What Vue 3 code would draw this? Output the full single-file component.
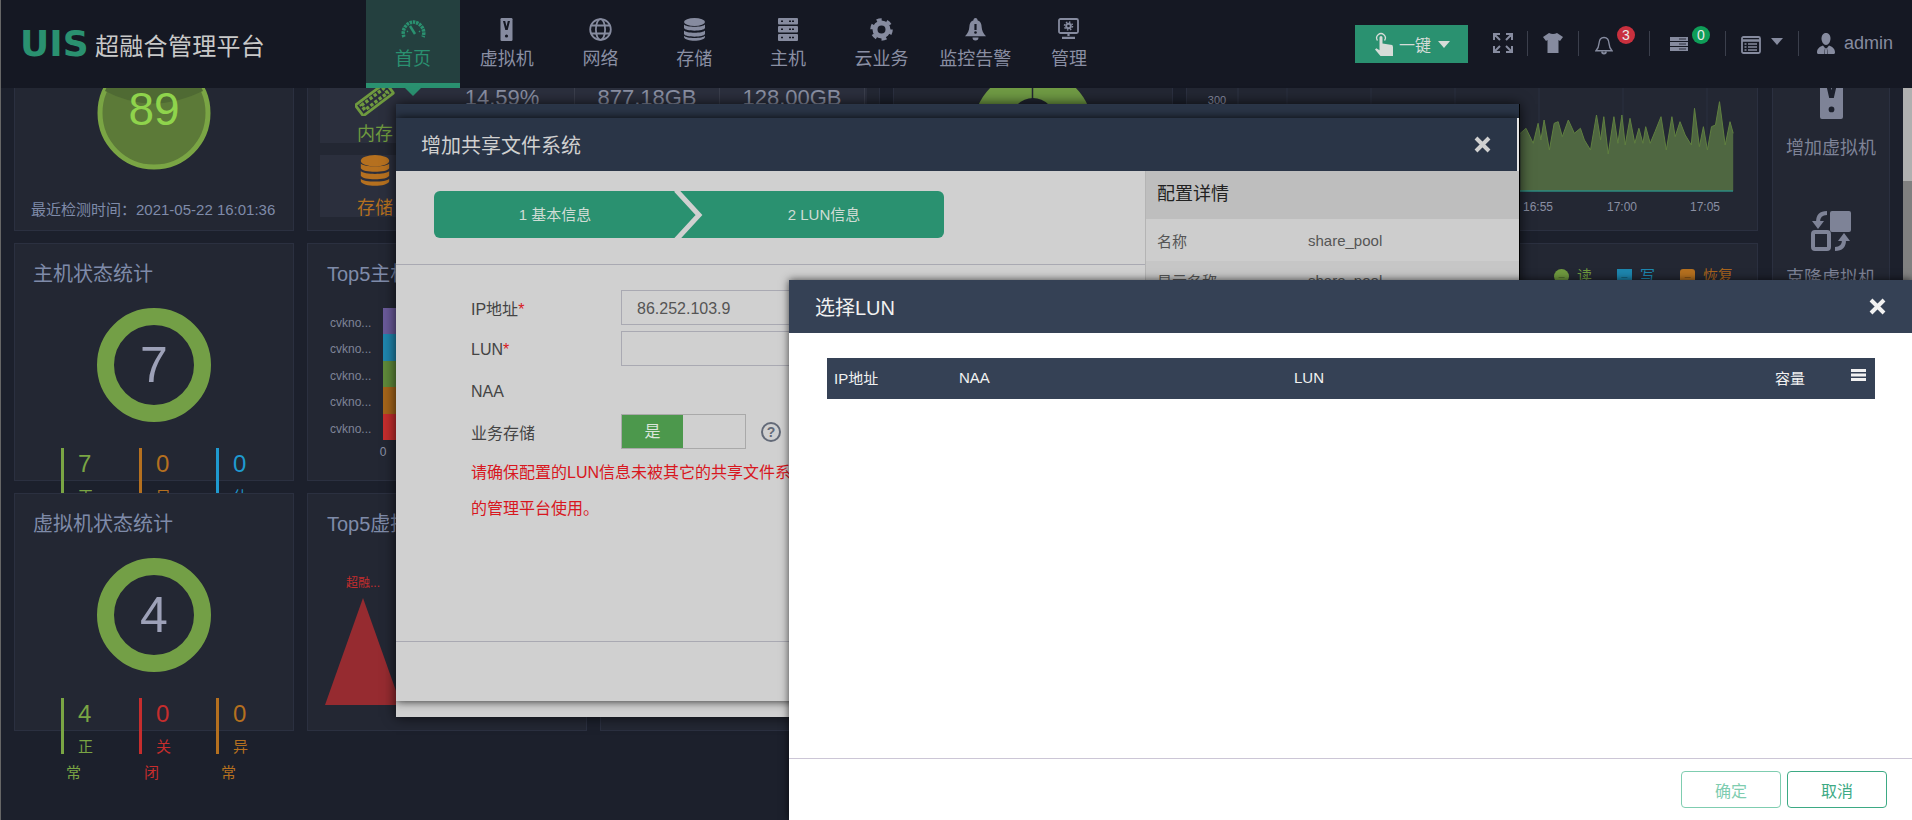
<script setup>
const nav = ['首页', '虚拟机', '网络', '存储', '主机', '云业务', '监控告警', '管理']

const raw = [
  [596,400],[610,385],[628,430],[640,370],[647,420],[655,360],[668,450],[680,370],[690,365],[700,410],[715,360],[730,400],[745,385],[755,420],[770,450],[785,345],[795,420],[803,350],[814,462],[828,350],[838,430],[848,345],[856,435],[868,355],[880,430],[890,385],[900,430],[907,380],[918,430],[930,395],[945,350],[958,450],[972,350],[980,410],[992,365],[1005,405],[1020,435],[1028,325],[1040,440],[1050,380],[1060,450],[1070,380],[1080,375],[1090,305],[1104,435],[1116,365],[1124,400]
]
const pts = raw.map(([x, y]) => [(1280 + x / 2.48).toFixed(1), (y / 3).toFixed(1)])
const line = pts.map(p => p.join(',')).join(' ')
const area = `${pts[0][0]},191 ${line} ${pts[pts.length - 1][0]},191`
const gridX = [1287, 1371, 1455, 1539, 1623, 1707]
const ticks = [['16:55', 1538], ['17:00', 1622], ['17:05', 1705]]

const hostStats = [
  { n: 7, label: '正常', c: 'green' },
  { n: 0, label: '异常', c: 'orange' },
  { n: 0, label: '休眠', c: 'blue' }
]
const vmStats = [
  { n: 4, label: '正常', c: 'green' },
  { n: 0, label: '关闭', c: 'red' },
  { n: 0, label: '异常', c: 'orange' }
]
const hosts = ['purple', 'blue', 'green', 'orange', 'red']
</script>

<template>
  <div class="page">
    <header class="top">
      <div class="logo">
        <span class="logo-mark">UIS</span>
        <span class="logo-name">超融合管理平台</span>
      </div>
      <nav class="nav">
        <div v-for="(item, i) in nav" :key="item" class="nav-item" :class="{ active: i === 0 }">
          <span class="nav-icon">
            <svg v-if="i === 0" width="25" height="18" viewBox="0 0 25 18" fill="none" stroke="#2a9170">
              <path d="M3 17A11 11 0 0 1 12.500 2 11 11 0 0 1 22 17" stroke-width="3.500" stroke-dasharray="2.500 .8" />
              <path d="M9 6l5 8" stroke-width="2.500" />
              <path d="M6 11l1 .8M19 11l-1 .8" stroke-width="1.500" />
            </svg>
            <svg v-else-if="i === 1" width="13" height="23" viewBox="0 0 12 23">
              <rect width="12" height="23" rx="1.200" fill="#868b9f" />
              <path d="M2.500 3h2.200L6 8.500 7.300 3h2.200L7.200 12H4.800z" fill="#151823" />
              <circle cx="6" cy="18" r="1.600" fill="#151823" />
            </svg>
            <svg v-else-if="i === 2" width="23" height="23" viewBox="0 0 23 23" fill="none" stroke="#868b9f" stroke-width="1.800">
              <circle cx="11.500" cy="11.500" r="10.300" />
              <ellipse cx="11.500" cy="11.500" rx="4.600" ry="10.300" />
              <path d="M2 7.500h19M2 15.500h19" />
            </svg>
            <svg v-else-if="i === 3" width="21" height="23" viewBox="0 0 21 23" fill="#868b9f">
              <ellipse cx="10.500" cy="4" rx="10.500" ry="4" />
              <path d="M0 6.500c2 3 19 3 21 0V10c-1 3.500-20 3.500-21 0zM0 12.500c2 3 19 3 21 0V16c-1 3.500-20 3.500-21 0zM0 17.800c2 3 19 3 21 0V19c-1 5-20 5-21 0z" />
            </svg>
            <svg v-else-if="i === 4" width="20" height="23" viewBox="0 0 20 23">
              <g fill="#868b9f">
                <rect width="20" height="6.500" rx="1" />
                <rect y="8" width="20" height="6.500" rx="1" />
                <rect y="16" width="20" height="7" rx="1" />
              </g>
              <path d="M11 3.200h6M11 11.200h6M11 19.500h6M3 3.200h3M3 11.200h3M3 19.500h3" stroke="#151823" stroke-width="1.500" stroke-dasharray="2 1" />
            </svg>
            <svg v-else-if="i === 5" width="23" height="23" viewBox="0 0 23 23" fill="none" stroke="#868b9f">
              <circle cx="11.500" cy="11.500" r="6.500" stroke-width="5" />
              <circle cx="11.500" cy="11.500" r="9.800" stroke-width="3" stroke-dasharray="5 5.260" />
            </svg>
            <svg v-else-if="i === 6" width="21" height="24" viewBox="0 0 21 24" fill="#868b9f">
              <path d="M10.500 0c1.500 0 2 1 2 2.200 3 1 4 3.500 4.200 7 .2 3 1.300 6 4.300 9H0c3-3 4.100-6 4.300-9 .2-3.500 1.200-6 4.200-7C8.500 1 9 0 10.500 0zM7.500 19.500h6a3 3 0 0 1-6 0z" />
              <rect x="9.400" y="6" width="2.200" height="6" fill="#151823" />
              <circle cx="10.500" cy="14.500" r="1.300" fill="#151823" />
            </svg>
            <svg v-else width="21" height="21" viewBox="0 0 21 21" fill="none" stroke="#868b9f">
              <rect x="1" y="1" width="19" height="14" rx="1.500" stroke-width="1.800" />
              <path d="M10.500 15v3M4 19.800h13" stroke-width="2.200" />
              <circle cx="10.500" cy="8" r="2.300" stroke-width="2" />
              <circle cx="10.500" cy="8" r="4" stroke-width="1.500" stroke-dasharray="1.500 1.640" />
            </svg>
          </span>
          <span class="nav-label">{{ item }}</span>
        </div>
      </nav>
      <div class="tools">
        <div class="one-key">
          <svg width="18" height="24" viewBox="0 0 18 24" fill="#d6dcd8">
            <path d="M2.500 8.500a4.300 4.300 0 1 1 7 0" fill="none" stroke="#d6dcd8" stroke-width="1.300" />
            <path d="M4.500 5.500a1.500 1.500 0 0 1 3 0v6l8 1.300a2.200 2.200 0 0 1 2.500 2.200V24H5.500L0 17.500l1.300-1.300 3.200 2z" />
          </svg>
          <span class="one-text">一键</span>
          <i class="caret light"></i>
        </div>
        <div class="tool tool-a">
          <svg width="20" height="20" viewBox="0 0 20 20" fill="none" stroke="#868b9f" stroke-width="2">
            <path d="M1 7V1h6M1 1l6 6M19 7V1h-6M19 1l-6 6M1 13v6h6M1 19l6-6M19 13v6h-6M19 19l-6-6" />
          </svg>
        </div>
        <div class="tool tool-b">
          <svg width="20" height="20" viewBox="0 0 20 20" fill="#868b9f">
            <path d="M6 0q4 2 8 0l6 4-3 4-1.500-1v13h-11V7L3 8 0 4z" />
          </svg>
        </div>
        <div class="tool tool-c">
          <span class="tool-icon bell">
            <svg width="18" height="19" viewBox="0 0 18 19" fill="none" stroke="#868b9f" stroke-width="1.400">
              <path d="M9 1.500c3.500 0 4.800 2.600 5 6 .2 2.800.8 5 3 7.300H1c2.200-2.300 2.800-4.500 3-7.300.2-3.400 1.500-6 5-6z" />
              <path d="M7 15.500a2 2 0 0 0 4 0" stroke-width="1.800" />
            </svg>
            <b class="badge red-badge">3</b>
          </span>
        </div>
        <div class="tool tool-d">
          <span class="tool-icon srv">
            <svg width="18" height="14" viewBox="0 0 18 14">
              <g fill="#868b9f">
                <rect width="18" height="4" />
                <rect y="5" width="18" height="4" />
                <rect y="10" width="18" height="4" />
              </g>
              <path d="M9 2h7M9 7h7M9 12h7" stroke="#151823" stroke-width=".8" />
            </svg>
            <b class="badge green-badge">0</b>
          </span>
        </div>
        <div class="tool tool-e">
          <svg class="cal" width="20" height="18" viewBox="0 0 20 18" fill="none" stroke="#868b9f">
            <rect x="1" y="1" width="18" height="16" rx="1.500" stroke-width="1.800" />
            <path d="M1 4.500h18" stroke-width="2.500" />
            <path d="M3.500 8h2M3.500 11h2M3.500 14h2M7 8h9M7 11h9M7 14h9" stroke-width="1.300" />
          </svg>
          <i class="caret"></i>
        </div>
        <div class="tool tool-f">
          <svg width="18" height="21" viewBox="0 0 18 21" fill="#868b9f">
            <path d="M9 0c3 0 4.500 2.500 4.500 5.500S11.500 12 9 12 4.500 8.500 4.500 5.500 6 0 9 0z" />
            <path d="M6 12.500 8 15l-1 6H1.500C.5 21 0 20.300 0 19.500c0-4 3-6 6-7zM12 12.500 10 15l1 6h5.500c1 0 1.500-.7 1.500-1.500 0-4-3-6-6-7zM8.300 15h1.400l.8 6h-3z" />
          </svg>
          <span class="admin">admin</span>
        </div>
      </div>
    </header>

    <main class="content">
      <div class="columns">
        <section class="row">
          <div class="card health">
            <svg class="health-ring" width="114" height="114" viewBox="0 0 114 114">
              <circle cx="57" cy="57" r="54" fill="#5c7a38" stroke="#7aa544" stroke-width="5" />
              <path d="M8 35Q55 60 106 35L90 0H24z" fill="#4f6a33" />
              <text x="57" y="69" text-anchor="middle" class="score">89</text>
            </svg>
            <p class="checked">最近检测时间：2021-05-22 16:01:36</p>
          </div>
          <div class="card wide-a">
            <div class="res-col">
              <div class="tile mem">
                <svg width="40" height="37" viewBox="0 0 40 37">
                  <g transform="rotate(-37 20 20)" fill="none" stroke="#6f9a3f">
                    <rect x="0" y="12" width="40" height="14" rx="1" stroke-width="3" />
                    <path d="M5 16h30v6H5z" stroke-width="3.500" stroke-dasharray="3.500 2" />
                  </g>
                </svg>
                <span>内存</span>
              </div>
              <div class="tile sto">
                <svg width="30" height="37" viewBox="0 0 30 37" fill="#b5701f">
                  <ellipse cx="15" cy="6" rx="15" ry="6" />
                  <path d="M0 9c3 4 27 4 30 0v5c-2 5-28 5-30 0zM0 17c3 4 27 4 30 0v5c-2 5-28 5-30 0zM0 25c3 4 27 4 30 0v3c-2 6-28 6-30 0z" />
                </svg>
                <span>存储</span>
              </div>
            </div>
            <div class="res-stats">
              <div class="cell">14.59%</div>
              <div class="cell">877.18GB</div>
              <div class="cell">128.00GB</div>
            </div>
          </div>
          <div class="card mid">
            <svg class="pie" width="120" height="120" viewBox="0 0 120 120">
              <circle cx="60" cy="60" r="60" fill="#6f9a44" />
              <path d="M59.500 0v40" stroke="#232733" stroke-width="1.500" />
              <circle cx="60" cy="50" r="22" fill="#1f2330" />
            </svg>
          </div>
          <div class="card wide-b">
            <svg class="chart" width="570" height="236" viewBox="1187 -6 570 236">
              <path v-for="x in gridX" :key="x" :d="`M${x} 70V191`" stroke="#2b3040" fill="none" />
              <path d="M1238 70V191" stroke="#2f3444" fill="none" />
              <text x="1217" y="104" text-anchor="middle" class="tick small">300</text>
              <polygon :points="area" fill="#4f6741" />
              <polyline :points="line" fill="none" stroke="#5f7f40" stroke-width="1" />
              <path d="M1519 191H1733" stroke="#2c8a80" stroke-width="1.500" />
              <text v-for="t in ticks" :key="t[0]" :x="t[1]" y="211" text-anchor="middle" class="tick">{{ t[0] }}</text>
            </svg>
          </div>
        </section>

        <section class="row">
          <div class="card stat-card">
            <h3>主机状态统计</h3>
            <div class="ring"><span>7</span></div>
            <div class="stats">
              <div v-for="s in hostStats" :key="s.label" class="stat" :class="s.c">
                <div class="num">{{ s.n }}</div>
                <div class="lab">{{ s.label }}</div>
              </div>
            </div>
          </div>
          <div class="card top5">
            <h3>Top5主机CPU利用率</h3>
            <div class="hbar">
              <div class="hnames">
                <span v-for="c in hosts" :key="c">cvkno...</span>
              </div>
              <div class="hbars">
                <i v-for="c in hosts" :key="c" :class="'b-' + c"></i>
              </div>
            </div>
            <div class="zero">0</div>
          </div>
          <div class="card fill">
            <div class="legend">
              <span class="lg g"><i class="round">–</i>读</span>
              <span class="lg b"><i>–</i>写</span>
              <span class="lg o"><i class="soft">–</i>恢复</span>
            </div>
          </div>
        </section>

        <section class="row">
          <div class="card stat-card">
            <h3>虚拟机状态统计</h3>
            <div class="ring"><span>4</span></div>
            <div class="stats">
              <div v-for="s in vmStats" :key="s.label" class="stat" :class="s.c">
                <div class="num">{{ s.n }}</div>
                <div class="lab">{{ s.label }}</div>
              </div>
            </div>
          </div>
          <div class="card top5">
            <h3>Top5虚拟机CPU利用率</h3>
            <div class="tri-label">超融...</div>
            <svg class="tri" width="76" height="107" viewBox="0 0 76 107">
              <polygon points="38,0 76,107 0,107" fill="#962b30" />
            </svg>
          </div>
          <div class="card fill"></div>
        </section>
      </div>

      <aside class="card side">
        <svg class="side-vm" width="23" height="46" viewBox="0 0 12 24">
          <rect width="12" height="24" rx="1" fill="#7e8397" />
          <path d="M2.500 3h2.200L6 9l1.300-6h2.200L7.200 13H4.800z" fill="#1c202c" />
          <circle cx="6" cy="19" r="1.500" fill="#1c202c" />
        </svg>
        <div class="side-text first">增加虚拟机</div>
        <svg class="side-clone" width="40" height="40" viewBox="0 0 40 40" fill="#7e8397">
          <rect x="19" y="0" width="21" height="21" rx="2" />
          <rect x="2" y="21" width="16" height="17" rx="2" fill="none" stroke="#7e8397" stroke-width="4" />
          <path d="M16 2Q7 2 7 11M24 38Q33 38 33 29" fill="none" stroke="#7e8397" stroke-width="4" />
          <path d="M1 10H13L7 18zM27 30H39L33 22z" />
        </svg>
        <div class="side-text">克隆虚拟机</div>
      </aside>
      <div class="scroll"><i></i></div>
    </main>

    <div class="dlg-wrap">
      <div class="dlg">
        <div class="dlg-head">
          <span>增加共享文件系统</span>
          <svg class="x" width="17" height="17" viewBox="0 0 17 17"><path d="M2 2 15 15M15 2 2 15" /></svg>
        </div>
        <div class="dlg-body">
          <div class="dlg-left">
            <div class="steps-pad">
              <div class="steps">
                <div class="step one">1 基本信息</div>
                <div class="step two">2 LUN信息</div>
                <svg class="chev" width="34" height="52" viewBox="0 0 34 52" fill="none">
                  <path d="M3 1 26 26 3 51" stroke="#d0d0d0" stroke-width="5" />
                </svg>
              </div>
            </div>
            <div class="form">
              <div class="f-row"><label>IP地址<em>*</em></label><div class="inp">86.252.103.9</div></div>
              <div class="f-row"><label class="nudge">LUN<em>*</em></label><div class="inp"></div></div>
              <div class="f-row"><label class="nudge2">NAA</label></div>
              <div class="f-row sw-row">
                <label>业务存储</label>
                <div class="switch"><span>是</span></div>
                <span class="help">?</span>
              </div>
              <p class="warn">请确保配置的LUN信息未被其它的共享文件系统或其它<br />的管理平台使用。</p>
            </div>
            <div class="dlg-foot"></div>
          </div>
          <div class="dlg-right">
            <h4>配置详情</h4>
            <div class="kv"><span>名称</span><span>share_pool</span></div>
            <div class="kv alt"><span>显示名称</span><span>share_pool</span></div>
          </div>
        </div>
      </div>
    </div>

    <div class="lun">
      <div class="lun-head">
        <span>选择LUN</span>
        <svg class="x light" width="17" height="17" viewBox="0 0 17 17"><path d="M2 2 15 15M15 2 2 15" /></svg>
      </div>
      <div class="lun-body">
        <div class="thead">
          <span class="th c1">IP地址</span>
          <span class="th c2">NAA</span>
          <span class="th c3">LUN</span>
          <span class="th c4">容量</span>
          <i class="menu"></i>
        </div>
      </div>
      <div class="lun-foot">
        <button class="btn off">确定</button>
        <button class="btn">取消</button>
      </div>
    </div>
  </div>
</template>

<style>
html, body { margin: 0; background: #1c202c; }
</style>

<style scoped>
.page {
  position: relative;
  width: 1912px;
  height: 820px;
  overflow: hidden;
  background: #1c202c;
  font-family: "Liberation Sans", "Noto Sans CJK SC", sans-serif;
  box-shadow: inset 1px 0 0 #666;
}

/* header */
.top {
  position: absolute;
  top: 0;
  left: 1px;
  right: 0;
  height: 88px;
  z-index: 10;
  display: flex;
  background: #151823;
}
.logo { width: 365px; flex: none; display: flex; align-items: center; padding-left: 19px; box-sizing: border-box; }
.logo-mark {
  width: 75px;
  font: 700 36px/44px "DejaVu Sans", sans-serif;
  color: #2a9170;
}
.logo-name { font-size: 24px; letter-spacing: .3px; color: #c9c9c9; }
.nav { display: flex; }
.nav-item {
  position: relative;
  width: 93.700px;
  display: flex;
  flex-direction: column;
  align-items: center;
  box-sizing: border-box;
  padding-top: 18px;
  color: #8a8fa3;
}
.nav-item.active { background: #24403f; color: #2a9170; border-bottom: 5px solid #2a9170; width: 94px; }
.nav-item.active::after {
  content: "";
  position: absolute;
  left: 39px;
  top: 88px;
  border: 8px solid transparent;
  border-top: 8px solid #2a9170;
  border-bottom: 0;
}
.nav-item.active .nav-icon { padding-top: 2px; height: 22px; }
.nav-icon { height: 24px; display: flex; align-items: flex-start; justify-content: center; }
.nav-label { margin-top: 6px; font-size: 18px; line-height: 22px; white-space: nowrap; }

.tools { position: absolute; left: 1354px; top: 0; display: flex; align-items: flex-start; }
.one-key {
  width: 113px;
  height: 38px;
  margin-top: 25px;
  margin-right: 10px;
  box-sizing: border-box;
  padding-left: 20px;
  background: #2a9170;
  display: flex;
  align-items: center;
  color: #d6dcd8;
}
.one-text { margin-left: 6px; font-size: 16px; }
.caret { margin-left: 6px; border: 6px solid transparent; border-top: 7px solid #868b9f; border-bottom: 0; }
.caret.light { border-top-color: #d6dcd8; margin-left: 7px; }
.tool {
  height: 25px;
  margin-top: 31px;
  box-sizing: border-box;
  display: flex;
  align-items: flex-start;
  border-right: 1px solid #3b3f4c;
}
.tool-a { width: 50px; padding: 2px 0 0 15px; }
.tool-b { width: 51px; padding: 2px 0 0 15px; }
.tool-c { width: 71px; padding: 5px 0 0 16px; }
.tool-d { width: 76px; padding: 6px 0 0 20px; }
.tool-e { width: 73px; padding: 5px 0 0 15px; }
.tool-f { width: 113px; padding: 2px 0 0 18px; border-right: 0; }
.tool-e .caret { margin-left: 10px; margin-top: 2px; }
.tool-icon { position: relative; display: block; }
.badge {
  position: absolute;
  width: 18px;
  height: 18px;
  border-radius: 50%;
  font: 400 14px/18px "Liberation Sans", sans-serif;
  text-align: center;
  color: #e9e9e9;
}
.bell .badge { left: 22px; top: -10px; }
.srv .badge { left: 22px; top: -11px; }
.red-badge { background: #c9303e; }
.green-badge { background: #0f9d58; }
.admin { margin-left: 9px; font-size: 18px; line-height: 20px; color: #868b9f; }

/* content */
.content { display: flex; padding-left: 14px; margin-top: -7px; }
.columns { width: 1744px; flex: none; display: flex; flex-direction: column; gap: 12px; }
.row { display: flex; gap: 13px; height: 238px; }
.card {
  position: relative;
  box-sizing: border-box;
  background: #232733;
  border: 1px solid #2b3040;
  flex: none;
}
.health { width: 280px; height: 238px; }
.health-ring { display: block; margin: 62px 0 0 82px; }
.score { font: 400 46px "Liberation Sans", sans-serif; fill: #8fd44c; }
.checked { margin: 30px 0 0 16px; font-size: 15px; line-height: 20px; color: #7f8ba9; white-space: nowrap; }

.wide-a { width: 573px; display: flex; padding: 87px 0 0 12px; }
.res-col { width: 110px; flex: none; display: flex; flex-direction: column; gap: 12px; }
.tile {
  height: 62px;
  background: #2b2f3d;
  display: flex;
  flex-direction: column;
  align-items: center;
  font-size: 18px;
  line-height: 18px;
}
.tile svg { display: block; margin-bottom: 9px; }
.tile span { white-space: nowrap; }
.mem { color: #6f9a3f; }
.sto { color: #b5701f; }
.res-stats { width: 437px; height: 62px; display: flex; background: #2b2f3d; }
.cell {
  width: 145px;
  text-align: center;
  font-size: 22px;
  line-height: 34px;
  color: #8a8fa3;
  border-right: 1px solid #3a3e4c;
  box-sizing: border-box;
}
.mid { width: 280px; }
.pie { display: block; margin: 76px auto 0; }
.wide-b { width: 572px; }
.chart { position: absolute; left: 0; top: 0; }
.tick { font: 400 12px "Liberation Sans", sans-serif; fill: #8a8fa3; }
.tick.small { font-size: 11px; }

.stat-card { width: 280px; padding: 15px 0 0 18px; }
.top5 { width: 280px; padding: 15px 0 0 19px; }
h3 { margin: 0; font-size: 20px; font-weight: 400; line-height: 30px; color: #7f8ba9; white-space: nowrap; }
.ring {
  width: 114px;
  height: 114px;
  box-sizing: border-box;
  margin: 19px 0 0 64px;
  border: 17px solid #739f46;
  border-radius: 50%;
  display: flex;
  align-items: center;
  justify-content: center;
  font-size: 50px;
  color: #9da1b8;
}
.stats { display: flex; margin: 26px 0 0 28px; }
.stat { position: relative; width: 78px; flex: none; }
.stat:nth-child(2) { width: 77px; }
.stat::before { content: ""; position: absolute; left: 0; top: 0; width: 3px; height: 56px; background: currentColor; }
.num { padding-left: 17px; margin-bottom: 4px; font-size: 24px; line-height: 32px; }
.lab { margin-left: 5px; width: 28px; text-indent: 12px; font-size: 15px; line-height: 26px; }
.green { color: #7aa544; }
.orange { color: #b5701f; }
.blue { color: #1f9ad0; }
.red { color: #c62d2d; }

.hbar { display: flex; margin: 19px 0 0 3px; }
.hnames { width: 53px; flex: none; display: flex; flex-direction: column; font-size: 12px; color: #7e8397; }
.hnames span { height: 26.400px; line-height: 30px; }
.hbars { display: flex; flex-direction: column; width: 60px; }
.hbars i { display: block; height: 26.400px; }
.b-purple { background: #6a5a9a; }
.b-blue { background: #1f86ae; }
.b-green { background: #5f8a3a; }
.b-orange { background: #a5651a; }
.b-red { background: #c62d2d; }
.zero { width: 20px; margin-left: 46px; text-align: center; font-size: 12px; line-height: 24px; color: #8a8fa3; }
.tri-label { margin: 35px 0 0 16px; width: 40px; text-align: center; font-size: 12px; line-height: 18px; color: #c62d2d; white-space: nowrap; }
.tri { display: block; margin: 6px 0 0 -2px; }

.fill { width: 1158px; }
.legend { display: flex; justify-content: flex-end; gap: 25px; padding: 23px 24px 0 0; }
.lg { display: flex; align-items: center; font-size: 15px; line-height: 18px; }
.lg i {
  width: 15px;
  height: 15px;
  margin-right: 8px;
  font: 400 11px/14px "Liberation Sans", sans-serif;
  text-align: center;
  color: rgba(0, 0, 0, .35);
}
.lg .round { border-radius: 50%; }
.lg .soft { border-radius: 3px; }
.g { color: #6f9a3f; }
.g i { background: #6f9a3f; }
.b { color: #1d86ae; }
.b i { background: #1d86ae; }
.o { color: #a8641d; }
.o i { background: #b5701f; }

.side {
  width: 118px;
  height: 738px;
  margin-left: 14px;
  display: flex;
  flex-direction: column;
  align-items: center;
}
.side-vm { display: block; margin-top: 79px; flex: none; }
.side-text { margin-top: 15px; font-size: 18px; line-height: 24px; color: #7e8397; }
.side-text.first { margin-top: 17px; }
.side-clone { display: block; margin-top: 51px; flex: none; }
.scroll { position: absolute; right: 0; top: 88px; width: 9px; height: 732px; background: #808080; }
.scroll i { display: block; height: 93px; background: #b0b0b0; }

/* first dialog */
.dlg-wrap {
  position: absolute;
  left: 396px;
  top: 104px;
  width: 1123px;
  height: 613px;
  z-index: 20;
  background: linear-gradient(#2a3547 14px, #d0d0d0 14px);
  box-shadow: 0 0 12px rgba(0, 0, 0, .75);
  border-right: 1px solid #000;
  overflow: hidden;
}
.dlg {
  margin-top: 14px;
  height: 583px;
  display: flex;
  flex-direction: column;
  background: #d0d0d0;
  box-shadow: 0 0 9px rgba(0, 0, 0, .85);
}
.dlg-head {
  height: 53px;
  flex: none;
  box-sizing: border-box;
  padding: 0 26px 0 25px;
  background: #2a3547;
  display: flex;
  align-items: center;
  justify-content: space-between;
  font-size: 20px;
  color: #d0d0d0;
  border-right: 2px solid #e4e4e4;
}
.x { display: block; fill: none; stroke: #d0d0d0; stroke-width: 4; }
.x.light { stroke: #f1f1f1; }
.dlg-body { flex: 1; display: flex; min-height: 0; }
.dlg-left { flex: 1; min-width: 0; display: flex; flex-direction: column; }
.steps-pad { height: 94px; flex: none; box-sizing: border-box; padding: 20px 0 0 38px; border-bottom: 1px solid #a9a9b2; }
.steps { position: relative; width: 510px; height: 47px; display: flex; }
.step {
  background: #2a9170;
  color: #cfdcd5;
  font-size: 15px;
  line-height: 47px;
  text-align: center;
}
.one { width: 242px; border-radius: 6px 0 0 6px; }
.two { width: 268px; padding-left: 28px; box-sizing: border-box; border-radius: 0 6px 6px 0; }
.chev { position: absolute; left: 239px; top: -2px; }
.form { flex: 1; padding: 25px 0 0 75px; }
.f-row { height: 35px; margin-bottom: 6px; display: flex; align-items: center; font-size: 16px; color: #444; }
.f-row label { width: 150px; flex: none; }
.f-row label.nudge { padding-top: 2px; }
.f-row label.nudge2 { padding-top: 4px; }
.f-row em { color: #d8171e; font-style: normal; }
.inp {
  width: 300px;
  height: 35px;
  box-sizing: border-box;
  padding-left: 15px;
  border: 1px solid #a9a9b2;
  line-height: 35px;
  color: #555;
}
.sw-row { margin-top: 7px; }
.switch { width: 125px; height: 35px; box-sizing: border-box; border: 1px solid #a9a9a9; }
.switch span {
  display: block;
  width: 61px;
  height: 33px;
  background: #4c984c;
  color: #dbe6db;
  line-height: 33px;
  text-align: center;
}
.help {
  width: 16px;
  height: 16px;
  margin-left: 15px;
  border: 2px solid #636a78;
  border-radius: 50%;
  font: 700 14px/16px "Liberation Sans", sans-serif;
  text-align: center;
  color: #636a78;
}
.warn { margin: 4px 0 0; font-size: 16px; line-height: 36px; color: #d8171e; white-space: nowrap; }
.dlg-foot { height: 60px; flex: none; border-top: 1px solid #a9a9b2; box-sizing: border-box; }
.dlg-right { width: 374px; flex: none; border-left: 1px solid #b4b4b4; box-sizing: border-box; }
h4 { margin: 0; height: 48px; padding-left: 11px; background: #bebebe; font-size: 18px; font-weight: 400; line-height: 46px; color: #222; }
.kv { height: 42px; box-sizing: border-box; display: flex; align-items: center; padding-left: 11px; background: #cdcdcd; font-size: 15px; color: #555; }
.kv.alt { background: #c6c6c6; padding-bottom: 4px; }
.kv span:first-child { width: 151px; }

/* second dialog */
.lun {
  position: absolute;
  left: 789px;
  top: 280px;
  width: 1123px;
  height: 540px;
  z-index: 30;
  display: flex;
  flex-direction: column;
  background: #fff;
  box-shadow: 0 0 8px rgba(0, 0, 0, .7);
}
.lun-head {
  height: 53px;
  flex: none;
  box-sizing: border-box;
  padding: 0 26px 0 26px;
  background: #354155;
  display: flex;
  align-items: center;
  justify-content: space-between;
  font-size: 20px;
  color: #f1f1f1;
}
.lun-body { flex: 1; padding: 25px 37px 0 38px; }
.thead {
  position: relative;
  height: 41px;
  padding-bottom: 2px;
  box-sizing: border-box;
  background: #354155;
  display: flex;
  align-items: center;
  color: #f1f1f1;
  font-size: 15px;
}
.th { flex: none; }
.c1 { margin-left: 7px; width: 125px; }
.c2 { width: 335px; }
.c3 { width: 481px; }
.c4 { width: 40px; }
.menu {
  position: absolute;
  left: 1024px;
  top: 11px;
  width: 15px;
  height: 3px;
  background: #f1f1f1;
  box-shadow: 0 4.500px 0 #f1f1f1, 0 9px 0 #f1f1f1;
}
.lun-foot {
  height: 62px;
  flex: none;
  box-sizing: border-box;
  border-top: 1px solid #ccc6d6;
  padding: 12px 25px 0 0;
  display: flex;
  justify-content: flex-end;
  gap: 6px;
}
.btn {
  width: 100px;
  height: 37px;
  background: #fff;
  border: 1px solid #3daa84;
  border-radius: 4px;
  font: 400 16px "Liberation Sans", "Noto Sans CJK SC", sans-serif;
  color: #3daa84;
}
.btn.off { border-color: #7fcdb0; color: #7fcdb0; }
</style>
